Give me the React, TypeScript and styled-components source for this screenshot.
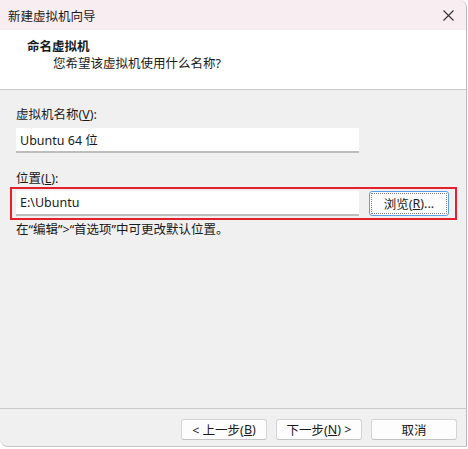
import React from "react";
import styled, { createGlobalStyle } from "styled-components";

const Global = createGlobalStyle`
  html, body { margin: 0; padding: 0; background: #ffffff; }
  body { font-family: "Segoe UI", "Noto Sans", "Noto Sans CJK SC", sans-serif; font-size: 12.5px; color: #1a1a1a; }
`;

const Window = styled.div`
  width: 467px;
  height: 447px;
  box-sizing: border-box;
  border-right: 1px solid #b8b8b8;
  border-bottom: 1px solid #c4c4c4;
  border-radius: 0 8px 0 8px;
  overflow: hidden;
  display: flex;
  flex-direction: column;
  background: #f0f0f0;
`;

const TitleBar = styled.div`
  height: 30px;
  background: #f8eef1;
  display: flex;
  align-items: center;
  justify-content: space-between;
  padding: 0 12px 0 8px;
  flex: none;
`;

const TitleText = styled.span`
  font-size: 12.5px;
  color: #1a1a1a;
`;

const CloseBtn = styled.div`
  width: 12px;
  height: 12px;
  display: flex;
  align-items: center;
  justify-content: center;
`;

const Header = styled.div`
  height: 60px;
  background: #ffffff;
  border-bottom: 1px solid #c9c9c9;
  padding: 8px 0 0 27px;
  box-sizing: border-box;
  flex: none;
`;

const HeaderTitle = styled.div`
  font-weight: bold;
  line-height: 17px;
`;

const HeaderSub = styled.div`
  padding-left: 26px;
  line-height: 18px;
`;

const Body = styled.div`
  flex: 1;
  display: flex;
  flex-direction: column;
  padding: 17px 0 0 16px;
`;

const Label = styled.div<{ gap: number }>`
  line-height: 16px;
  margin-bottom: ${(p) => p.gap}px;
`;

const TextBox = styled.div`
  width: 343px;
  height: 25px;
  flex: none;
  box-sizing: border-box;
  background: #ffffff;
  border-bottom: 2px solid #bdbdbd;
  display: flex;
  align-items: center;
  padding-left: 4px;
`;

const Spacer = styled.div<{ h: number }>`
  height: ${(p) => p.h}px;
  flex: none;
`;

const Highlight = styled.div`
  margin-left: -6px;
  width: 447px;
  height: 33px;
  box-sizing: border-box;
  border: 2px solid #e3202b;
  display: flex;
  align-items: center;
  padding-left: 4px;
  gap: 10px;
`;

const BrowseBtn = styled.div`
  width: 80px;
  height: 25px;
  box-sizing: border-box;
  border: 1px solid #5a9ee6;
  outline: 1px dotted #7a7a7a;
  outline-offset: -3px;
  border-radius: 3px;
  background: #fdfdfd;
  display: flex;
  align-items: center;
  justify-content: center;
`;

const Hint = styled.div`
  margin-top: 2px;
  line-height: 16px;
`;

const Footer = styled.div`
  height: 38px;
  border-top: 1px solid #c9c9c9;
  box-sizing: border-box;
  display: flex;
  justify-content: flex-end;
  align-items: flex-start;
  padding: 10px 9px 0 0;
  gap: 9px;
  flex: none;
`;

const Btn = styled.div`
  width: 86px;
  height: 21px;
  box-sizing: border-box;
  background: #fdfdfd;
  border: 1px solid #d4d4d4;
  border-bottom-color: #c4c4c4;
  border-radius: 3px;
  display: flex;
  align-items: center;
  justify-content: center;
`;

const U = styled.span`
  text-decoration: underline;
`;

export default function App() {
  return (
    <>
      <Global />
      <Window>
        <TitleBar>
          <TitleText>新建虚拟机向导</TitleText>
          <CloseBtn>
            <svg width="11" height="11" viewBox="0 0 11 11">
              <path d="M0.5 0.5 L10.5 10.5 M10.5 0.5 L0.5 10.5" stroke="#333" strokeWidth="1.1" />
            </svg>
          </CloseBtn>
        </TitleBar>
        <Header>
          <HeaderTitle>命名虚拟机</HeaderTitle>
          <HeaderSub>您希望该虚拟机使用什么名称?</HeaderSub>
        </Header>
        <Body>
          <Label gap={5}>
            虚拟机名称(<U>V</U>):
          </Label>
          <TextBox>Ubuntu 64 位</TextBox>
          <Spacer h={18} />
          <Label gap={0}>
            位置(<U>L</U>):
          </Label>
          <Highlight>
            <TextBox>E:\Ubuntu</TextBox>
            <BrowseBtn>
              浏览(<U>R</U>)...
            </BrowseBtn>
          </Highlight>
          <Hint>在“编辑”&gt;“首选项”中可更改默认位置。</Hint>
        </Body>
        <Footer>
          <Btn>
            &lt; 上一步(<U>B</U>)
          </Btn>
          <Btn>
            下一步(<U>N</U>) &gt;
          </Btn>
          <Btn>取消</Btn>
        </Footer>
      </Window>
    </>
  );
}
